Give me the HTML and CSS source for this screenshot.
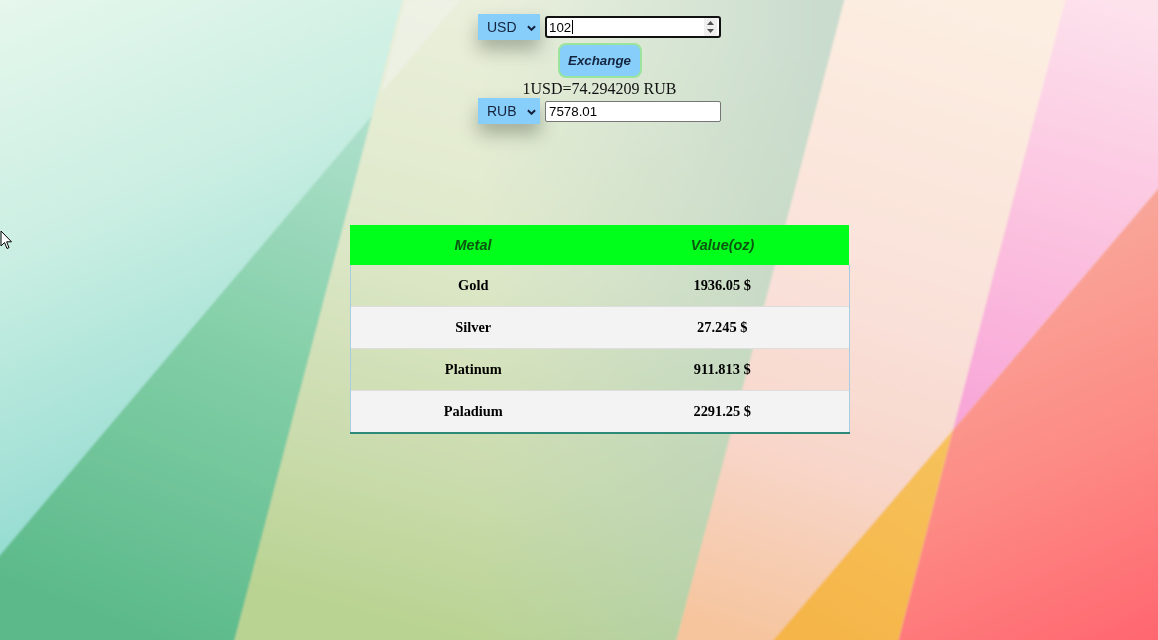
FILE: index.html
```html
<!DOCTYPE html>
<html lang="en">
<head>
<meta charset="utf-8">
<title>Currency Exchange</title>
<link rel="stylesheet" href="styles.css">
</head>
<body>
<svg class="wallpaper" viewBox="0 0 1158 640" preserveAspectRatio="none" aria-hidden="true">
  <defs>
    <filter id="soft" x="-5%" y="-5%" width="110%" height="110%">
      <feGaussianBlur stdDeviation="0.8"/>
    </filter>
    <linearGradient id="g1u" gradientUnits="userSpaceOnUse" x1="0" y1="0" x2="260" y2="600">
      <stop offset="0" stop-color="#e6f7ec"/>
      <stop offset="0.35" stop-color="#ccefe3"/>
      <stop offset="0.7" stop-color="#a2e0d6"/>
      <stop offset="1" stop-color="#74d4c6"/>
    </linearGradient>
    <linearGradient id="g1l" gradientUnits="userSpaceOnUse" x1="360" y1="120" x2="160" y2="640">
      <stop offset="0" stop-color="#aee0cc"/>
      <stop offset="0.45" stop-color="#84cfa8"/>
      <stop offset="1" stop-color="#5cba8a"/>
    </linearGradient>
    <linearGradient id="g2" gradientUnits="userSpaceOnUse" x1="620" y1="0" x2="450" y2="640">
      <stop offset="0" stop-color="#ecf1de"/>
      <stop offset="0.4" stop-color="#e0e9cc"/>
      <stop offset="0.75" stop-color="#cbdcae"/>
      <stop offset="1" stop-color="#b9d392"/>
    </linearGradient>
    <linearGradient id="g2r" gradientUnits="userSpaceOnUse" x1="480" y1="0" x2="820" y2="0">
      <stop offset="0" stop-color="#9cc4c0" stop-opacity="0"/>
      <stop offset="1" stop-color="#9cc0b8" stop-opacity="0.42"/>
    </linearGradient>
    <linearGradient id="g3" gradientUnits="userSpaceOnUse" x1="960" y1="0" x2="760" y2="640">
      <stop offset="0" stop-color="#fdeee2"/>
      <stop offset="0.5" stop-color="#f9e0d8"/>
      <stop offset="0.72" stop-color="#f8d6ca"/>
      <stop offset="1" stop-color="#f6c59e"/>
    </linearGradient>
    <linearGradient id="go" gradientUnits="userSpaceOnUse" x1="940" y1="430" x2="820" y2="640">
      <stop offset="0" stop-color="#f7c25c"/>
      <stop offset="1" stop-color="#f5b548"/>
    </linearGradient>
    <linearGradient id="gp" gradientUnits="userSpaceOnUse" x1="1110" y1="0" x2="990" y2="420">
      <stop offset="0" stop-color="#fde2ec"/>
      <stop offset="0.5" stop-color="#fcc4e0"/>
      <stop offset="1" stop-color="#f8a6d8"/>
    </linearGradient>
    <linearGradient id="gr" gradientUnits="userSpaceOnUse" x1="1000" y1="280" x2="1158" y2="640">
      <stop offset="0" stop-color="#f9a498"/>
      <stop offset="0.5" stop-color="#fd8a84"/>
      <stop offset="1" stop-color="#ff6670"/>
    </linearGradient>
  </defs>
  <g filter="url(#soft)">
    <rect x="-10" y="-10" width="1180" height="660" fill="#e6eedc"/>
    <polygon points="-10,-10 408,-10 232,650 -10,650" fill="url(#g1u)"/>
    <polygon points="-10,567 375,112 232,650 -10,650" fill="url(#g1l)"/>
    <polygon points="405,-10 850,-10 674,650 232,650" fill="url(#g2)"/>
    <polygon points="405,-10 850,-10 674,650 232,650" fill="url(#g2r)"/>
    <polygon points="405,0 460,0 381,93" fill="#f0f4ec" fill-opacity="0.6"/>
    <polygon points="847,-10 1071,-10 895,650 674,650" fill="url(#g3)"/>
    <polygon points="953,430 896,650 765,650" fill="url(#go)"/>
    <polygon points="1068,-10 1170,-10 1170,175 953,430" fill="url(#gp)"/>
    <polygon points="953,430 1170,175 1170,650 896,650" fill="url(#gr)"/>
  </g>
</svg>

<main class="page">
  <section class="converter">
    <div class="field-row">
      <span class="select-wrap">
        <select class="currency" aria-label="From currency"><option>USD</option></select>
        <svg class="chevron" viewBox="0 0 10 6" aria-hidden="true"><polyline points="1,1 5,5 9,1" fill="none" stroke="#16233d" stroke-width="2.2"/></svg>
      </span>
      <span class="input-wrap">
        <input class="amount amount-active" type="text" value="102" aria-label="Amount">
        <span class="caret"></span>
        <svg class="spinner" viewBox="0 0 13 18" aria-hidden="true">
          <rect x="0" y="0" width="13" height="18" fill="#efefef"/>
          <polygon points="3,7 6.5,3 10,7" fill="#505050"/>
          <polygon points="3,11 6.5,15 10,11" fill="#505050"/>
        </svg>
      </span>
    </div>
    <button class="exchange" type="button">Exchange</button>
    <p class="rate">1USD=74.294209 RUB</p>
    <div class="field-row">
      <span class="select-wrap">
        <select class="currency" aria-label="To currency"><option>RUB</option></select>
        <svg class="chevron" viewBox="0 0 10 6" aria-hidden="true"><polyline points="1,1 5,5 9,1" fill="none" stroke="#16233d" stroke-width="2.2"/></svg>
      </span>
      <span class="input-wrap">
        <input class="amount" type="text" value="7578.01" aria-label="Result">
      </span>
    </div>
  </section>

  <table class="metals">
    <thead>
      <tr><th class="col-metal">Metal</th><th>Value(oz)</th></tr>
    </thead>
    <tbody>
      <tr><td>Gold</td><td>1936.05 $</td></tr>
      <tr><td>Silver</td><td>27.245 $</td></tr>
      <tr><td>Platinum</td><td>911.813 $</td></tr>
      <tr><td>Paladium</td><td>2291.25 $</td></tr>
    </tbody>
  </table>
</main>

<svg class="cursor" viewBox="0 0 13 20" aria-hidden="true">
  <path d="M1,1 L1,16 L4.5,12.5 L7,18.5 L9,17.6 L6.6,11.8 L11.5,11.8 Z" fill="#ffffff" stroke="#000000" stroke-width="1" stroke-linejoin="round"/>
</svg>
</body>
</html>
```

FILE: styles.css
```css
html, body {
  margin: 0;
  height: 100%;
}

body {
  font-family: "Liberation Serif", "Times New Roman", serif;
  color: #000;
  overflow: hidden;
  position: relative;
}

.wallpaper {
  position: fixed;
  left: 0;
  top: 0;
  width: 100%;
  height: 100%;
  z-index: -1;
  display: block;
}

.page {
  box-sizing: border-box;
  width: 100%;
  padding-left: 41px;
  display: flex;
  flex-direction: column;
  align-items: center;
}

.converter {
  display: flex;
  flex-direction: column;
  align-items: center;
  padding-top: 14px;
}

.field-row {
  display: flex;
  align-items: center;
  gap: 5px;
}

.select-wrap {
  position: relative;
  display: block;
  box-shadow: 0 10px 18px rgba(40, 55, 40, 0.35);
}

.currency {
  -webkit-appearance: none;
  appearance: none;
  display: block;
  margin: 0;
  border: none;
  border-radius: 0;
  background: #87cefa;
  width: 62px;
  height: 26px;
  padding: 0 0 0 9px;
  font: 14px "Liberation Sans", Arial, sans-serif;
  color: #16233d;
}

.chevron {
  position: absolute;
  left: 49px;
  top: 11px;
  width: 9px;
  height: 6px;
  pointer-events: none;
}

.input-wrap {
  position: relative;
  display: block;
}

.amount {
  box-sizing: border-box;
  display: block;
  margin: 0;
  width: 176px;
  height: 21px;
  border: 1px solid #767676;
  border-radius: 2px;
  padding: 1px 3px;
  background: #fff;
  font: 13.33px "Liberation Sans", Arial, sans-serif;
  color: #000;
  outline: none;
}

.amount-active {
  height: 22px;
  border: 2px solid #111;
  border-radius: 3px;
  padding: 0 2px;
}

.caret {
  position: absolute;
  left: 27px;
  top: 4px;
  width: 1px;
  height: 14px;
  background: #000;
}

.spinner {
  position: absolute;
  right: 4px;
  top: 2px;
  width: 13px;
  height: 18px;
}

.exchange {
  box-sizing: border-box;
  margin: 3px 0 0;
  width: 84px;
  height: 35px;
  padding: 0;
  background: #87cefa;
  border: 2px solid #9be49b;
  border-radius: 8px;
  font: italic bold 13.33px "Liberation Sans", Arial, sans-serif;
  color: #15253f;
}

.rate {
  margin: 2px 0 0;
  font-size: 16px;
  line-height: 18px;
  color: #111;
}

.metals {
  margin-top: 101px;
  width: 500px;
  border-collapse: collapse;
  font-size: 14.4px;
}

.metals th {
  padding: 12px 15px;
  background: #00ff1a;
  font: italic bold 14.4px/16px "Liberation Sans", Arial, sans-serif;
  color: #0b560f;
  text-align: center;
}

.metals .col-metal {
  width: 216px;
}

.metals td {
  padding: 12px 15px;
  line-height: 17px;
  font-weight: bold;
  text-align: center;
  color: #000;
}

.metals tbody tr {
  border-bottom: 1px solid #dddddd;
}

.metals tbody tr:nth-of-type(even) {
  background: #f3f3f3;
}

.metals tbody tr:last-of-type {
  border-bottom: 2px solid #2e8a78;
}

.metals td:first-child {
  border-left: 1px solid #a9cde0;
}

.metals td:last-child {
  border-right: 1px solid #a9cde0;
}

.cursor {
  position: absolute;
  left: 0;
  top: 230px;
  width: 13px;
  height: 20px;
}
```
